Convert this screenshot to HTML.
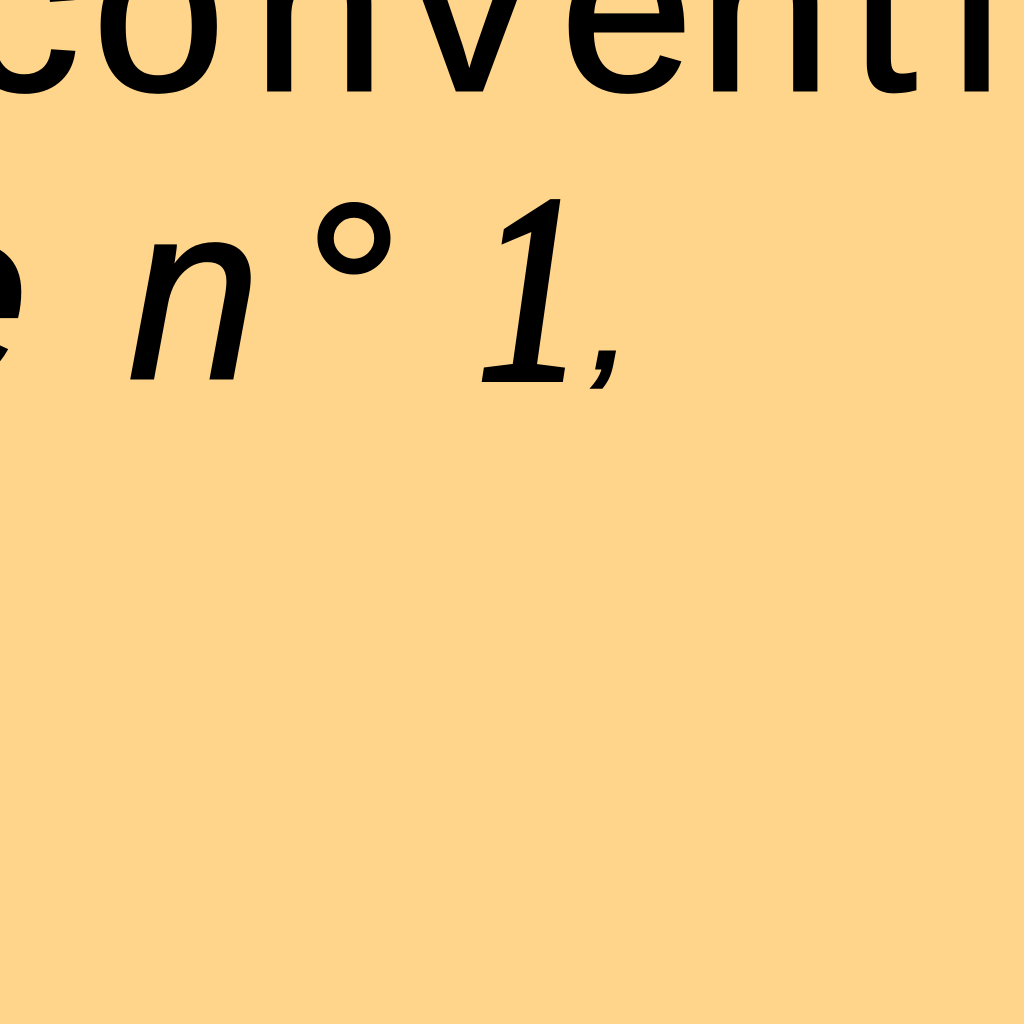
<!DOCTYPE html>
<html><head><meta charset="utf-8"><style>
html,body{margin:0;padding:0;background:#FFD58C;width:1024px;height:1024px;overflow:hidden}
svg{display:block}
text{font-family:"Liberation Sans",sans-serif;fill:#000;stroke:#000;stroke-width:3}
</style></head><body>
<svg width="1024" height="1024" viewBox="0 0 1024 1024">
<rect width="1024" height="1024" fill="#FFD58C"/>
<g font-size="240">
<text x="-40" y="90">c</text>
<text x="92" y="90">o</text>
<text x="252" y="90">n</text>
<text x="410" y="90">v</text>
<text x="560" y="90">e</text>
<text x="698" y="90">n</text>
<text x="850" y="90">t</text>
<text x="950" y="90">i</text>
</g>
<g font-size="250" font-style="italic">
<text x="-110" y="378">e</text>
<text x="0" y="0" transform="translate(128,378) scale(0.95,1)">n</text>
<text x="295" y="378">°</text>
<text x="0" y="0" transform="translate(478,378) scale(0.8,1)" style="font-family:'Liberation Serif',serif;font-size:265px;stroke-width:8px">1</text>
<text x="590" y="368" font-size="150" stroke-width="2">,</text>
</g>
</svg>
</body></html>
